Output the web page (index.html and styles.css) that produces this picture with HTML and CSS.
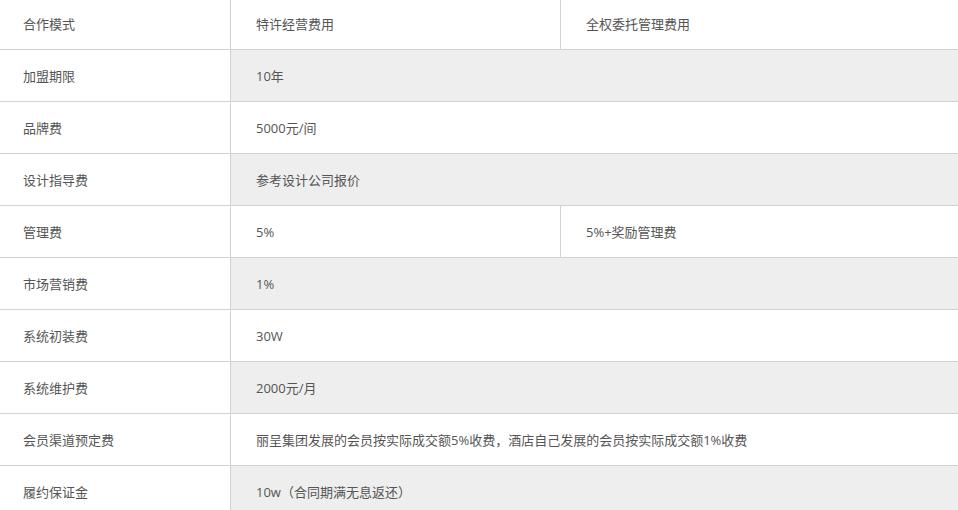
FILE: index.html
```html
<!DOCTYPE html>
<html lang="zh">
<head>
<meta charset="utf-8">
<title>合作模式</title>
<link rel="stylesheet" href="styles.css">
</head>
<body>
<div class="wrap">
<table class="fees">
  <tr><td class="k">合作模式</td><td class="v2">特许经营费用</td><td>全权委托管理费用</td></tr>
  <tr class="alt"><td class="k">加盟期限</td><td colspan="2">10年</td></tr>
  <tr><td class="k">品牌费</td><td colspan="2">5000元/间</td></tr>
  <tr class="alt"><td class="k">设计指导费</td><td colspan="2">参考设计公司报价</td></tr>
  <tr><td class="k">管理费</td><td class="v2">5%</td><td>5%+奖励管理费</td></tr>
  <tr class="alt"><td class="k">市场营销费</td><td colspan="2">1%</td></tr>
  <tr><td class="k">系统初装费</td><td colspan="2">30W</td></tr>
  <tr class="alt"><td class="k">系统维护费</td><td colspan="2">2000元/月</td></tr>
  <tr><td class="k">会员渠道预定费</td><td colspan="2">丽呈集团发展的会员按实际成交额5%收费，酒店自己发展的会员按实际成交额1%收费</td></tr>
  <tr class="alt"><td class="k">履约保证金</td><td colspan="2">10w（合同期满无息返还）</td></tr>
</table>
</div>
</body>
</html>
```
FILE: styles.css
```css
html, body {
  margin: 0;
  padding: 0;
  background: #fff;
}
.wrap {
  width: 958px;
  height: 510px;
  overflow: hidden;
}
.fees {
  border-collapse: collapse;
  margin: -3px 0 0 -1px;
  width: 1000px;
  table-layout: fixed;
  font-family: "Open Sans", "Noto Sans CJK SC", sans-serif;
  font-size: 13px;
  color: #555;
}
.fees td {
  border: 1px solid #d2d2d2;
  height: 52px;
  box-sizing: border-box;
  padding: 0 0 0 25px;
  vertical-align: middle;
  white-space: nowrap;
}
.fees td.k {
  width: 231px;
  padding-left: 23px;
  background: #fff;
}
.fees td.v2 {
  width: 330px;
}
.fees tr.alt td {
  background: #eeeeee;
}
.fees tr.alt td.k {
  background: #fff;
}
```
